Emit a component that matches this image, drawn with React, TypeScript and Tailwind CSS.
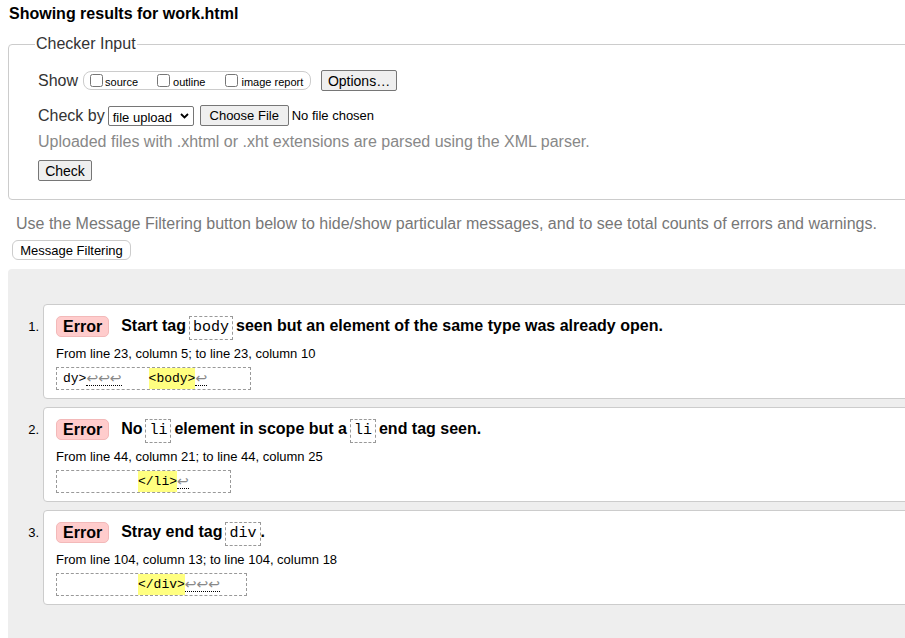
import React from "react";

const sans = { fontFamily: '"Liberation Sans", Arial, sans-serif' };

function Ret({ n }: { n: number }) {
  return (
    <span className="border-b border-dotted border-black font-['DejaVu_Sans',sans-serif] text-[14px] leading-[14px] text-[#888]">
      {"↩".repeat(n)}
    </span>
  );
}

function Tag({ children }: { children: React.ReactNode }) {
  return (
    <code className="mx-[3px] inline-block border border-dashed border-[#999] px-[3px] py-0 font-['Liberation_Mono',monospace] text-[15px] font-normal leading-[22px]">
      {children}
    </code>
  );
}

function Card({
  n,
  msg,
  loc,
  extract,
}: {
  n: number;
  msg: React.ReactNode;
  loc: string;
  extract: React.ReactNode;
}) {
  return (
    <li className="flex">
      <div className="w-[35px] shrink-0 pr-[4px] pt-[13px] text-right text-[13px]">{n}.</div>
      <div className="h-[95px] flex-1 rounded-l-[4px] border border-[#ccc] bg-white pl-[12px] pt-[8px]">
        <div className="flex items-center text-[16px] font-bold leading-[26px]">
          <span className="mr-[12px] rounded-[5px] border border-[#f3b9b9] bg-[#ffcccc] px-[6px] leading-[19px]">
            Error
          </span>
          <span>{msg}</span>
        </div>
        <div className="mt-[6px] text-[13px] leading-[15px]">{loc}</div>
        {extract}
      </div>
    </li>
  );
}

const extractCls =
  "mt-[6px] flex h-[23px] items-center whitespace-pre border border-dashed border-[#999] pl-[6px] font-['Liberation_Mono',monospace] text-[13px] leading-[21px]";

export default function App() {
  return (
    <div className="h-[638px] w-[905px] overflow-hidden bg-white text-black" style={sans}>
      <div className="w-[1000px]">
        <h2 className="ml-[9px] pt-[5px] text-[16px] font-bold leading-[18px]">Showing results for work.html</h2>

        <fieldset className="ml-[8px] mt-[12px] rounded-[4px] border border-[#ccc] pb-[16px] pl-[26px]">
          <legend className="px-px text-[16px] leading-[18px] text-[#333]">Checker Input</legend>
          <div className="ml-[3px] mt-[17px] flex h-[21px] items-center">
            <span className="mr-[5px] text-[16px] text-[#333]">Show</span>
            <div className="flex h-[19px] w-[228px] items-center rounded-[8px] border border-[#ccc] pl-[6px] text-[11px]">
              <label className="mr-[19px] flex items-center">
                <input type="checkbox" className="m-0 mr-[2px] h-[13px] w-[13px]" />
                <span className="mt-[3px]">source</span>
              </label>
              <label className="mr-[20px] flex items-center">
                <input type="checkbox" className="m-0 mr-[3px] h-[13px] w-[13px]" />
                <span className="mt-[3px]">outline</span>
              </label>
              <label className="flex items-center">
                <input type="checkbox" className="m-0 mr-[3px] h-[13px] w-[13px]" />
                <span className="mt-[3px]">image report</span>
              </label>
            </div>
            <button className="ml-[10px] h-[21px] w-[76px] rounded-[2px] border border-[#767676] bg-[#efefef] text-[14px]">
              Options…
            </button>
          </div>
          <div className="ml-[3px] mt-[14px] flex h-[21px] items-center">
            <span className="mr-[3px] text-[16px] text-[#333]">Check by</span>
            <div className="relative h-[20px] w-[86px] rounded-[2px] border border-[#767676] bg-white text-[13px]">
              <span className="absolute left-[4px] top-[1px]">file upload</span>
              <svg className="absolute right-[4px] top-[6px]" width="9" height="6" viewBox="0 0 9 6">
                <path d="M1 1 L4.5 4.5 L8 1" stroke="black" strokeWidth="1.8" fill="none" />
              </svg>
            </div>
            <button className="ml-[6px] h-[21px] w-[89px] rounded-[2px] border border-[#767676] bg-[#efefef] text-[13px]">
              Choose File
            </button>
            <span className="ml-[3px] text-[13px]">No file chosen</span>
          </div>
          <p className="ml-[3px] mt-[7px] text-[16px] leading-[18px] text-[#888]">
            Uploaded files with .xhtml or .xht extensions are parsed using the XML parser.
          </p>
          <button className="ml-[3px] mt-[9px] h-[21px] w-[54px] rounded-[2px] border border-[#767676] bg-[#efefef] text-[14px]">
            Check
          </button>
        </fieldset>

        <p className="ml-[16px] mt-[15px] text-[16px] leading-[18px] text-[#777]">
          Use the Message Filtering button below to hide/show particular messages, and to see total counts of errors and warnings.
        </p>
        <button className="ml-[12px] mt-[7px] h-[20px] w-[119px] rounded-[6px] border border-[#ccc] bg-white text-[13px]">
          Message Filtering
        </button>

        <div className="ml-[8px] mt-[7px] h-[400px] rounded-tl-[4px] bg-[#eeeeee] pt-[35px]">
          <ol className="flex flex-col gap-[8px]">
            <Card
              n={1}
              msg={
                <>
                  Start tag<Tag>body</Tag>seen but an element of the same type was already open.
                </>
              }
              loc="From line 23, column 5; to line 23, column 10"
              extract={
                <div className={extractCls + " w-[195px]"}>
                  <span>dy&gt;</span>
                  <Ret n={3} />
                  <span className="inline-block w-[27px]" />
                  <span className="bg-[#ffff80]">&lt;body&gt;</span>
                  <Ret n={1} />
                </div>
              }
            />
            <Card
              n={2}
              msg={
                <>
                  No<Tag>li</Tag>element in scope but a<Tag>li</Tag>end tag seen.
                </>
              }
              loc="From line 44, column 21; to line 44, column 25"
              extract={
                <div className={extractCls + " w-[175px]"}>
                  <span className="inline-block w-[75px]" />
                  <span className="bg-[#ffff80]">&lt;/li&gt;</span>
                  <Ret n={1} />
                </div>
              }
            />
            <Card
              n={3}
              msg={
                <>
                  Stray end tag<Tag>div</Tag>
                  <span className="-ml-[3px]">.</span>
                </>
              }
              loc="From line 104, column 13; to line 104, column 18"
              extract={
                <div className={extractCls + " w-[191px]"}>
                  <span className="inline-block w-[75px]" />
                  <span className="bg-[#ffff80]">&lt;/div&gt;</span>
                  <Ret n={3} />
                </div>
              }
            />
          </ol>
        </div>
      </div>
    </div>
  );
}
